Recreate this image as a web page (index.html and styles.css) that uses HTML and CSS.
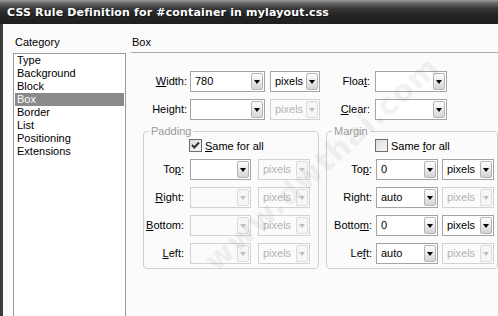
FILE: index.html
```html
<!DOCTYPE html>
<html>
<head>
    <meta charset="UTF-8">
    <title>CSS Rule Definition</title>
    <link rel="stylesheet" href="styles.css">
</head>
<body>
    <div class="dialog">
        <div class="titlebar">CSS Rule Definition for #container in mylayout.css</div>
        <div class="main">
            <div class="sidebar">
                <div class="side-title">Category</div>
                <ul class="list">
                    <li>Type</li>
                    <li>Background</li>
                    <li>Block</li>
                    <li class="selected">Box</li>
                    <li>Border</li>
                    <li>List</li>
                    <li>Positioning</li>
                    <li>Extensions</li>
                </ul>
            </div>

            <div class="content">
                <div class="content-title">Box</div>

                <div class="row first">
                    <div class="lab w56"><u>W</u>idth:</div>
                    <div class="combo w75 ml3"><span class="val">780</span><span class="btn"><i></i></span></div>
                    <div class="combo w50 ml5"><span class="val">pixels</span><span class="btn"><i></i></span></div>
                    <div class="lab w50">Floa<u>t</u>:</div>
                    <div class="combo w72 ml5"><span class="val"></span><span class="btn"><i></i></span></div>
                </div>

                <div class="row">
                    <div class="lab w56">Hei<u>g</u>ht:</div>
                    <div class="combo w75 ml3"><span class="val"></span><span class="btn"><i></i></span></div>
                    <div class="combo w50 ml5 off"><span class="val">pixels</span><span class="btn"><i></i></span></div>
                    <div class="lab w50"><u>C</u>lear:</div>
                    <div class="combo w72 ml5"><span class="val"></span><span class="btn"><i></i></span></div>
                </div>

                <div class="groups">
                    <fieldset class="group padding">
                        <legend>Padding</legend>
                        <div class="check-row">
                            <span class="chk"><svg width="11" height="11" viewBox="0 0 11 11"><path d="M2 5 L4.3 7.5 L9 2.5" fill="none" stroke="#333" stroke-width="2"/></svg></span>
                            <span><u>S</u>ame for all</span>
                        </div>
                        <div class="grow top">
                            <div class="lab">To<u>p</u>:</div>
                            <div class="combo field"><span class="val"></span><span class="btn"><i></i></span></div>
                            <div class="combo unit off"><span class="val">pixels</span><span class="btn"><i></i></span></div>
                        </div>
                        <div class="grow">
                            <div class="lab"><u>R</u>ight:</div>
                            <div class="combo field off"><span class="val"></span><span class="btn"><i></i></span></div>
                            <div class="combo unit off"><span class="val">pixels</span><span class="btn"><i></i></span></div>
                        </div>
                        <div class="grow">
                            <div class="lab"><u>B</u>ottom:</div>
                            <div class="combo field off"><span class="val"></span><span class="btn"><i></i></span></div>
                            <div class="combo unit off"><span class="val">pixels</span><span class="btn"><i></i></span></div>
                        </div>
                        <div class="grow">
                            <div class="lab"><u>L</u>eft:</div>
                            <div class="combo field off"><span class="val"></span><span class="btn"><i></i></span></div>
                            <div class="combo unit off"><span class="val">pixels</span><span class="btn"><i></i></span></div>
                        </div>
                    </fieldset>

                    <fieldset class="group margin">
                        <legend>Margin</legend>
                        <div class="check-row">
                            <span class="chk"></span>
                            <span>Same <u>f</u>or all</span>
                        </div>
                        <div class="grow top">
                            <div class="lab">To<u>p</u>:</div>
                            <div class="combo field"><span class="val">0</span><span class="btn"><i></i></span></div>
                            <div class="combo unit"><span class="val">pixels</span><span class="btn"><i></i></span></div>
                        </div>
                        <div class="grow">
                            <div class="lab">Ri<u>g</u>ht:</div>
                            <div class="combo field"><span class="val">auto</span><span class="btn"><i></i></span></div>
                            <div class="combo unit off"><span class="val">pixels</span><span class="btn"><i></i></span></div>
                        </div>
                        <div class="grow">
                            <div class="lab">Botto<u>m</u>:</div>
                            <div class="combo field"><span class="val">0</span><span class="btn"><i></i></span></div>
                            <div class="combo unit"><span class="val">pixels</span><span class="btn"><i></i></span></div>
                        </div>
                        <div class="grow">
                            <div class="lab">Le<u>f</u>t:</div>
                            <div class="combo field"><span class="val">auto</span><span class="btn"><i></i></span></div>
                            <div class="combo unit off"><span class="val">pixels</span><span class="btn"><i></i></span></div>
                        </div>
                    </fieldset>
                </div>
            </div>
        </div>
        <div class="watermark">www.dwthai.com</div>
    </div>
</body>
</html>
```

FILE: styles.css
```css
body {
    margin: 0;
    font-family: "Liberation Sans", Arial, sans-serif;
    font-size: 11px;
    color: #000;
}
.dialog {
    position: relative;
    width: 498px;
    height: 316px;
    overflow: hidden;
    background-color: #fbfbfb;
}
.titlebar {
    height: 24px;
    padding-left: 7px;
    line-height: 25px;
    font-family: "DejaVu Sans", Verdana, sans-serif;
    font-size: 11px;
    font-weight: bold;
    letter-spacing: 0.16px;
    color: #fff;
    text-shadow: 1px 1px 0 #111;
    background: linear-gradient(#9c9c9c 0, #6a6a6a 3px, #3a3a3a 8px, #262626 14px, #1e1e1e 24px);
}
.main {
    display: flex;
    height: 292px;
    border-left: 3px solid #3c3c3c;
}
.sidebar {
    width: 113px;
    padding-left: 10px;
    flex-shrink: 0;
}
.side-title {
    padding: 11px 0 0 2px;
    line-height: 14px;
}
.list {
    list-style: none;
    margin: 4px 0 0 0;
    padding: 0 1px;
    height: 300px;
    border: 1px solid #9a9a9a;
    background-color: #fff;
}
.list li {
    height: 13px;
    line-height: 13px;
    padding-left: 2px;
}
.list .selected {
    background-color: #8a8a8a;
    color: #fff;
}
.content {
    flex: 1;
    padding-left: 5px;
}
.content-title {
    padding: 11px 0 3px 1px;
    line-height: 14px;
    border-bottom: 1px solid #a8a8a8;
}
.row {
    display: flex;
    height: 21px;
    margin-top: 7px;
}
.row.first {
    margin-top: 18px;
}
.lab {
    box-sizing: border-box;
    flex-shrink: 0;
    line-height: 21px;
    text-align: right;
    white-space: nowrap;
}
.w56 { width: 56px; }
.w50 { width: 50px; }
.w72 { width: 72px; }
.w75 { width: 75px; }
.ml3 { margin-left: 3px; }
.ml5 { margin-left: 5px; }

.combo {
    display: flex;
    flex-shrink: 0;
    box-sizing: border-box;
    height: 21px;
    padding: 1px;
    border: 1px solid #a4a4a4;
    background-color: #fff;
}
.combo .val {
    flex: 1;
    padding-left: 3px;
    line-height: 17px;
    overflow: hidden;
}
.combo .btn {
    display: flex;
    align-items: center;
    justify-content: center;
    box-sizing: border-box;
    width: 12px;
    border: 1px solid #b4b4b4;
    border-radius: 2px;
    background: linear-gradient(#fdfdfd, #e6e6e6 60%, #d4d4d4);
}
.combo .btn i {
    display: block;
    width: 0;
    height: 0;
    border-left: 3px solid transparent;
    border-right: 3px solid transparent;
    border-top: 4px solid #000;
}
.combo.off {
    border-color: #d2d2d2;
    background-color: #fbfbfb;
    color: #b2b2b2;
}
.combo.off .btn {
    border-color: #dcdcdc;
    background: #f6f6f6;
}
.combo.off .btn i {
    border-top-color: #c0c0c0;
}

.groups {
    display: flex;
    margin-top: 5px;
}
.group {
    margin: 0;
    padding: 0 0 4px 0;
    min-width: 0;
    border: 1px solid #cfcfcf;
    border-radius: 4px;
}
.group legend {
    margin-left: 5px;
    padding: 0 2px;
    line-height: 13px;
    color: #9a9a9a;
}
.padding {
    width: 176px;
    box-sizing: border-box;
    margin-left: 12px;
}
.margin {
    width: 172px;
    box-sizing: border-box;
    margin-left: 7px;
}
.check-row {
    display: flex;
    align-items: center;
    gap: 3px;
    height: 13px;
    margin-top: 1px;
}
.padding .check-row { padding-left: 45px; }
.margin .check-row { padding-left: 48px; }
.chk {
    display: flex;
    align-items: center;
    justify-content: center;
    box-sizing: border-box;
    width: 13px;
    height: 13px;
    border: 1px solid #6e6e6e;
    background: linear-gradient(135deg, #dcdcdc, #f8f8f8);
}
.grow {
    display: flex;
    height: 21px;
    margin-top: 7px;
}
.grow.top { margin-top: 7px; }
.padding .lab { width: 43px; padding-right: 3px; margin-right: 3px; }
.padding .field { width: 61px; }
.padding .unit { width: 52px; margin-left: 7px; }
.margin .lab { width: 47px; padding-right: 2px; margin-right: 2px; }
.margin .field { width: 62px; }
.margin .unit { width: 52px; margin-left: 4px; }

.watermark {
    position: absolute;
    left: 170px;
    top: 146px;
    transform: rotate(-42deg);
    font-family: "DejaVu Sans", sans-serif;
    font-size: 30px;
    font-weight: bold;
    letter-spacing: 1px;
    color: rgba(120, 120, 120, 0.11);
    pointer-events: none;
}
```
